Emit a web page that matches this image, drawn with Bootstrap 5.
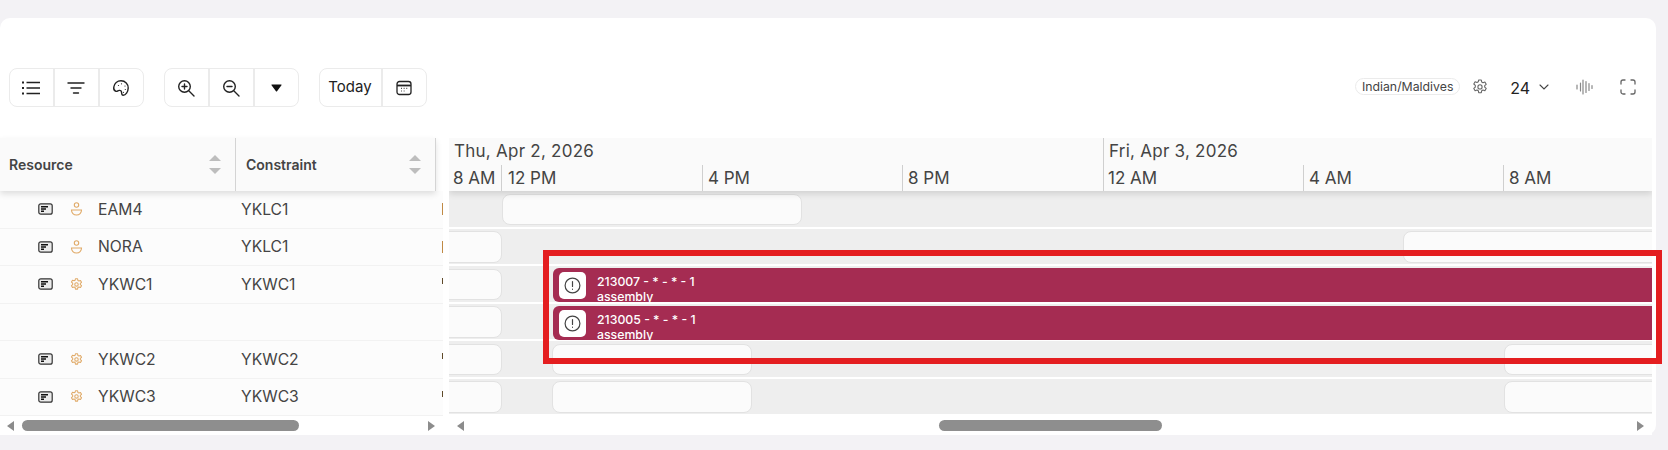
<!DOCTYPE html>
<html lang="en">
<head>
<meta charset="utf-8">
<title>Gantt</title>
<link href="https://cdn.jsdelivr.net/npm/bootstrap@5.3.0/dist/css/bootstrap.min.css" rel="stylesheet">
<style>
html,body{height:450px;overflow:hidden}
body{background:#f3f2f5;font-family:Inter,"Liberation Sans",sans-serif;color:#444;margin:0}
.sheet{position:relative;width:1656px;height:417px;margin-top:18px;background:#fff;border-radius:10px}
.toolrow{height:120px;padding:50px 20px 0 9px}
.tb-group{height:39px;border:1.5px solid #ebebeb;border-radius:8px;background:#fff}
.tb-btn{flex:1 1 0;height:100%;display:flex;align-items:center;justify-content:center;border-right:2px solid #ebebeb;color:#222}
.tb-btn:last-child{border-right:0}
.tb-today{flex:0 0 63px;font-size:15px;color:#222}
.tz-pill{font-size:12.3px;line-height:15px;padding:0 5px;border:1px solid #ebebeb;border-radius:9px;color:#444;width:105px;height:17px;text-align:center;white-space:nowrap;margin-top:-2px}
.pick{font-size:16px;color:#222}
.leftpane{width:449px;flex:none}
.lefthead{width:436px;height:53px;background:#fafafa;box-shadow:0 3px 6px rgba(0,0,0,.12);position:relative;z-index:2}
.hcell{height:53px;padding:0 0 0 9px;font-size:14px;font-weight:600;color:#444;border-right:1.5px solid #d4d4d4}
.hcell-a{width:236px}
.hcell-b{width:200px;padding-left:10px}
.sorter{display:flex;flex-direction:column;gap:7px;margin-left:auto;margin-right:14px}
.sorter i{display:block;width:0;height:0;border-left:6px solid transparent;border-right:6px solid transparent}
.sorter i:first-child{border-bottom:6px solid #bdbdbd}
.sorter i:last-child{border-top:6px solid #bdbdbd}
.lrow{width:443px;height:37.5px;background:#fcfcfc;border-bottom:1px solid #f2f2f2;font-size:15.7px;color:#444;overflow:hidden}
.ico-a{margin-left:38px;width:15px;flex:none}
.ico-b{margin-left:17px;width:13px;flex:none}
.rname{margin-left:15px;width:143px;flex:none;padding-top:1px}
.rcons{width:201px;flex:none;padding-top:1px}
.rsliver{width:1px;flex:none;height:12px;background:#c08a45}
.rsliver-y{width:1px;flex:none;height:6px;background:#5f4a2a;margin-top:-6px}
.scrollrow{height:19px;background:#fff}
.arr-l,.arr-r{width:0;height:0;border-top:5px solid transparent;border-bottom:5px solid transparent;flex:none}
.arr-l{border-right:7px solid #8c8c8c}
.arr-r{border-left:7px solid #8c8c8c}
.thumb{height:11px;background:#8e8e8e;border-radius:6px;flex:none}
.ganttpane{width:1203px;flex:none;overflow:hidden}
.ganttview{position:relative;overflow:hidden}
.ghead{height:53px;background:#fafafa;box-shadow:0 3px 6px rgba(0,0,0,.12);position:relative;z-index:2;color:#444}
.dayrow{height:27px;position:relative;font-size:17px;line-height:27px;letter-spacing:.25px}
.hourrow{height:26px;position:relative;font-size:17px;line-height:26px}
.dayrow span,.hourrow span{position:absolute;top:0;white-space:nowrap}
.tick{position:absolute;top:0;bottom:0;width:1px;background:#cfcfcf}
.grow{height:37.5px;background:#eee;border-bottom:2px solid #fff;position:relative}
.slot{position:absolute;top:2.500px;height:31.5px;background:#fbfbfb;border:1px solid #e2e2e2;border-radius:8px}
.task{position:absolute;top:2px;height:34px;background:#a52c52;color:#fff;border-radius:6px 0 0 6px;overflow:hidden;display:flex;font-size:12.3px;font-weight:500;line-height:15px}
.task-ico{width:27px;height:27px;margin:4px 0 0 6px;background:#fff;border-radius:5px;display:flex;align-items:center;justify-content:center;flex:none}
.task-txt{margin:6px 0 0 11px;white-space:nowrap}
.callout{position:absolute;left:543px;top:232px;width:1119px;height:114px;border:6px solid #e41e20;pointer-events:none;z-index:5}
</style>
</head>
<body>
<div class="sheet">
  <div class="toolrow d-flex align-items-start">
    <div class="tb-group d-flex" style="width:134.500px">
      <div class="tb-btn"><svg width="20" height="16" viewBox="0 0 20 16" fill="none" stroke="#222" stroke-width="1.500"><path d="M5.500 2.500h13.500M5.500 8h13.500M5.500 13.500h13.500"/><path d="M1 2.500h2M1 8h2M1 13.500h2" stroke-width="2.200"/></svg></div>
      <div class="tb-btn"><svg width="18" height="14" viewBox="0 0 18 14" fill="none" stroke="#222" stroke-width="1.400" stroke-linecap="round"><path d="M1 2h16M4 7h10M6.500 12h5"/></svg></div>
      <div class="tb-btn"><svg width="18" height="18" viewBox="0 0 18 18" fill="none" stroke="#222" stroke-width="1.400" stroke-linejoin="round"><path d="M9 1.800c4.300 0 7.300 3.200 7.200 7.100-.1 4-2.600 7.300-5 7.300-1.600 0-1.500-1.500-1.600-2.600-.1-1.500-1-2.400-2.400-2.200-1.300.2-2 1.300-3.300.9C2.400 11.800 1.400 10.300 1.800 8 2.400 4.400 5.300 1.800 9 1.800z"/><g fill="#222" stroke="none"><circle cx="6.500" cy="6.500" r=".6"/><circle cx="9.500" cy="4.800" r=".6"/><circle cx="13" cy="7" r=".6"/><circle cx="13.300" cy="10.500" r=".6"/><circle cx="11.500" cy="13.300" r=".6"/></g></svg></div>
    </div>
    <div class="tb-group d-flex" style="width:135px;margin-left:20px">
      <div class="tb-btn"><svg width="18" height="18" viewBox="0 0 18 18" fill="none" stroke="#222" stroke-width="1.400" stroke-linecap="round"><circle cx="7.500" cy="7.500" r="5.800"/><path d="M12 12l5 5M7.500 5v5M5 7.500h5"/></svg></div>
      <div class="tb-btn"><svg width="18" height="18" viewBox="0 0 18 18" fill="none" stroke="#222" stroke-width="1.400" stroke-linecap="round"><circle cx="7.500" cy="7.500" r="5.800"/><path d="M12 12l5 5M5 7.500h5"/></svg></div>
      <div class="tb-btn"><svg width="11" height="8" viewBox="0 0 12 9"><path d="M1 .5h10c.6 0 .9.600.6 1L6.600 8.200c-.3.400-.9.400-1.200 0L.4 1.500C.1 1.100.4.500 1 .5z" fill="#111"/></svg></div>
    </div>
    <div class="tb-group d-flex" style="width:108.500px;margin-left:20px">
      <div class="tb-btn tb-today">Today</div>
      <div class="tb-btn"><svg width="16" height="16" viewBox="0 0 16 16" fill="none" stroke="#222" stroke-width="1.300"><rect x="1" y="1.500" width="14" height="13" rx="2.500"/><path d="M1 5.500h14" stroke-width="1.800"/><path d="M5 8.300h.8M7.700 8.300h.8M10.400 8.300h.8M5 11h.8M7.700 11h.8" stroke-width="1.200"/></svg></div>
    </div>
    <div class="d-flex align-items-center ms-auto" style="height:39px;margin-top:-.500px">
      <div class="tz-pill">Indian/Maldives</div>
      <svg style="margin-left:12px" width="16" height="16" viewBox="0 0 16 16" fill="none" stroke="#666" stroke-width="1.100" stroke-linejoin="round"><path d="M6.700 1h2.600l.4 2 1.300.7 1.900-.7 1.300 2.300-1.500 1.300v1.500l1.500 1.300-1.300 2.300-1.900-.7-1.300.7-.4 2H6.700l-.4-2-1.300-.7-1.900.7-1.300-2.300 1.500-1.300V6.300L1.800 5l1.300-2.300 1.900.7 1.300-.7z"/><circle cx="8" cy="7.900" r="2.100"/></svg>
      <div class="pick" style="margin-left:22px;padding-top:1px">24</div>
      <svg style="margin-left:9px" width="10" height="6" viewBox="0 0 10 6" fill="none" stroke="#444" stroke-width="1.100" stroke-linecap="round"><path d="M1 1l4 4 4-4"/></svg>
      <svg style="margin-left:27px" width="17" height="16" viewBox="0 0 17 16" fill="none" stroke="#888" stroke-width="1.200" stroke-linecap="round"><path d="M1 6v4M4.500 4v8M7 1v14M10 2.500v11M13 4.500v7M16 6.500v3"/></svg>
      <svg style="margin-left:27px" width="16" height="16" viewBox="0 0 16 16" fill="none" stroke="#666" stroke-width="1.300" stroke-linecap="round"><path d="M1 5V3a2 2 0 0 1 2-2h2M11 1h2a2 2 0 0 1 2 2v2M15 11v2a2 2 0 0 1-2 2h-2M5 15H3a2 2 0 0 1-2-2v-2"/></svg>
    </div>
  </div>
  <div class="d-flex">
    <div class="leftpane">
      <div class="lefthead d-flex">
        <div class="hcell hcell-a d-flex align-items-center">Resource<span class="sorter"><i></i><i></i></span></div>
        <div class="hcell hcell-b d-flex align-items-center">Constraint<span class="sorter"><i></i><i></i></span></div>
      </div>
      <div class="lrow d-flex align-items-center">
        <svg class="ico-a" width="15" height="12" viewBox="0 0 15 12" fill="#ececec" stroke="#333" stroke-width="1.200"><rect x=".8" y=".8" width="13.400" height="10.400" rx="2"/><path d="M3 3.800h7M3 6h5M3 8.200h3" stroke="#111" stroke-width="1.400"/></svg>
        <svg class="ico-b" width="12" height="14" viewBox="0 0 12 14" fill="none" stroke="#e0aa68" stroke-width="1.100"><circle cx="6" cy="3" r="2.200"/><path d="M1 8h10c0 3-2 5-5 5S1 11 1 8z"/></svg>
        <span class="rname">EAM4</span><span class="rcons">YKLC1</span><span class="rsliver"></span>
      </div>
      <div class="lrow d-flex align-items-center">
        <svg class="ico-a" width="15" height="12" viewBox="0 0 15 12" fill="#ececec" stroke="#333" stroke-width="1.200"><rect x=".8" y=".8" width="13.400" height="10.400" rx="2"/><path d="M3 3.800h7M3 6h5M3 8.200h3" stroke="#111" stroke-width="1.400"/></svg>
        <svg class="ico-b" width="12" height="14" viewBox="0 0 12 14" fill="none" stroke="#e0aa68" stroke-width="1.100"><circle cx="6" cy="3" r="2.200"/><path d="M1 8h10c0 3-2 5-5 5S1 11 1 8z"/></svg>
        <span class="rname">NORA</span><span class="rcons">YKLC1</span><span class="rsliver"></span>
      </div>
      <div class="lrow d-flex align-items-center">
        <svg class="ico-a" width="15" height="12" viewBox="0 0 15 12" fill="#ececec" stroke="#333" stroke-width="1.200"><rect x=".8" y=".8" width="13.400" height="10.400" rx="2"/><path d="M3 3.800h7M3 6h5M3 8.200h3" stroke="#111" stroke-width="1.400"/></svg>
        <svg class="ico-b" width="12" height="13" viewBox="0 0 16 16" fill="none" stroke="#e0aa68" stroke-width="1.300" stroke-linejoin="round"><path d="M6.700 1h2.600l.4 2 1.300.7 1.900-.7 1.300 2.300-1.500 1.300v1.500l1.500 1.300-1.300 2.300-1.900-.7-1.300.7-.4 2H6.700l-.4-2-1.300-.7-1.900.7-1.300-2.300 1.500-1.300V6.300L1.800 5l1.300-2.300 1.900.7 1.300-.7z"/><circle cx="8" cy="7.900" r="2.100"/></svg>
        <span class="rname">YKWC1</span><span class="rcons">YKWC1</span><span class="rsliver-y"></span>
      </div>
      <div class="lrow"></div>
      <div class="lrow d-flex align-items-center">
        <svg class="ico-a" width="15" height="12" viewBox="0 0 15 12" fill="#ececec" stroke="#333" stroke-width="1.200"><rect x=".8" y=".8" width="13.400" height="10.400" rx="2"/><path d="M3 3.800h7M3 6h5M3 8.200h3" stroke="#111" stroke-width="1.400"/></svg>
        <svg class="ico-b" width="12" height="13" viewBox="0 0 16 16" fill="none" stroke="#e0aa68" stroke-width="1.300" stroke-linejoin="round"><path d="M6.700 1h2.600l.4 2 1.300.7 1.900-.7 1.300 2.300-1.500 1.300v1.500l1.500 1.300-1.300 2.300-1.900-.7-1.300.7-.4 2H6.700l-.4-2-1.300-.7-1.900.7-1.300-2.300 1.500-1.300V6.300L1.800 5l1.300-2.300 1.900.7 1.300-.7z"/><circle cx="8" cy="7.900" r="2.100"/></svg>
        <span class="rname">YKWC2</span><span class="rcons">YKWC2</span><span class="rsliver-y"></span>
      </div>
      <div class="lrow d-flex align-items-center">
        <svg class="ico-a" width="15" height="12" viewBox="0 0 15 12" fill="#ececec" stroke="#333" stroke-width="1.200"><rect x=".8" y=".8" width="13.400" height="10.400" rx="2"/><path d="M3 3.800h7M3 6h5M3 8.200h3" stroke="#111" stroke-width="1.400"/></svg>
        <svg class="ico-b" width="12" height="13" viewBox="0 0 16 16" fill="none" stroke="#e0aa68" stroke-width="1.300" stroke-linejoin="round"><path d="M6.700 1h2.600l.4 2 1.300.7 1.900-.7 1.300 2.300-1.500 1.300v1.500l1.500 1.300-1.300 2.300-1.900-.7-1.300.7-.4 2H6.700l-.4-2-1.300-.7-1.900.7-1.300-2.300 1.500-1.300V6.300L1.800 5l1.300-2.300 1.900.7 1.300-.7z"/><circle cx="8" cy="7.900" r="2.100"/></svg>
        <span class="rname">YKWC3</span><span class="rcons">YKWC3</span><span class="rsliver-y"></span>
      </div>
      <div class="scrollrow d-flex align-items-center" style="padding-left:7px;width:443px">
        <span class="arr-l"></span>
        <span class="thumb" style="width:277px;margin-left:8px"></span>
        <span class="arr-r" style="margin-left:auto;margin-right:8px"></span>
      </div>
    </div>
    <div class="ganttpane">
      <div class="ganttview">
        <div class="ghead">
          <div class="dayrow">
            <span style="left:5px">Thu, Apr 2, 2026</span>
            <span style="left:660px">Fri, Apr 3, 2026</span>
            <i class="tick" style="left:654px"></i>
          </div>
          <div class="hourrow">
            <span style="left:4px">8 AM</span><i class="tick" style="left:52px"></i>
            <span style="left:59px">12 PM</span><i class="tick" style="left:253px"></i>
            <span style="left:259px">4 PM</span><i class="tick" style="left:453px"></i>
            <span style="left:459px">8 PM</span><i class="tick" style="left:654px"></i>
            <span style="left:659px">12 AM</span><i class="tick" style="left:854px"></i>
            <span style="left:860px">4 AM</span><i class="tick" style="left:1054px"></i>
            <span style="left:1060px">8 AM</span>
          </div>
        </div>
        <div class="grow"><div class="slot" style="left:53px;width:300px"></div></div>
        <div class="grow"><div class="slot" style="left:-20px;width:73px"></div><div class="slot" style="left:954px;width:280px"></div></div>
        <div class="grow"><div class="slot" style="left:-20px;width:73px"></div>
          <div class="task" style="left:104px;width:1110px"><span class="task-ico"><svg width="17" height="17" viewBox="0 0 17 17" fill="none" stroke="#444" stroke-width="1.200" stroke-linecap="round"><circle cx="8.500" cy="8.500" r="7.400"/><path d="M8.500 4.500v5M8.500 12.200v.1"/></svg></span><div class="task-txt">213007 - * - * - 1<br>assembly</div></div></div>
        <div class="grow"><div class="slot" style="left:-20px;width:73px"></div>
          <div class="task" style="left:104px;width:1110px"><span class="task-ico"><svg width="17" height="17" viewBox="0 0 17 17" fill="none" stroke="#444" stroke-width="1.200" stroke-linecap="round"><circle cx="8.500" cy="8.500" r="7.400"/><path d="M8.500 4.500v5M8.500 12.200v.1"/></svg></span><div class="task-txt">213005 - * - * - 1<br>assembly</div></div></div>
        <div class="grow"><div class="slot" style="left:-20px;width:73px"></div><div class="slot" style="left:103px;width:200px"></div><div class="slot" style="left:1055px;width:180px"></div></div>
        <div class="grow"><div class="slot" style="left:-20px;width:73px"></div><div class="slot" style="left:103px;width:200px"></div><div class="slot" style="left:1055px;width:180px"></div></div>
      </div>
      <div class="scrollrow d-flex align-items-center" style="padding-left:8px">
        <span class="arr-l"></span>
        <span class="thumb" style="width:223px;margin-left:475px"></span>
        <span class="arr-r" style="margin-left:auto;margin-right:8px"></span>
      </div>
    </div>
  </div>
  <div class="callout"></div>
</div>
<script src="https://cdn.jsdelivr.net/npm/bootstrap@5.3.0/dist/js/bootstrap.bundle.min.js"></script>
</body>
</html>
